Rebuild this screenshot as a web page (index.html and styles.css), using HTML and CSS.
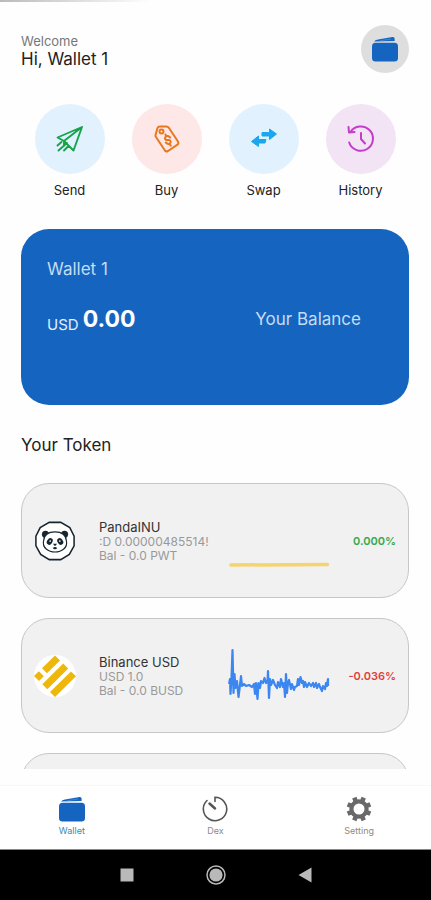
FILE: index.html
```html
<!DOCTYPE html>
<html lang="en">
<head>
<meta charset="utf-8">
<meta name="viewport" content="width=device-width, initial-scale=1">
<title>Wallet</title>
<link rel="stylesheet" href="styles.css">
</head>
<body>
<svg class="defs" aria-hidden="true">
  <symbol id="wallet" viewBox="0 0 28 26">
    <path d="M3 5.500 Q4 4 7 3.500 L21.500 .9 Q23.600 .7 23.600 2.600 V5 L3.400 5.500 Z" fill="#1565c0"/>
    <path d="M9 4.800 L20 3" stroke="#4b8bd6" stroke-width=".8"/>
    <rect x="1" y="6.800" width="26" height="18.700" rx="3.500" fill="#1565c0"/>
  </symbol>
</svg>
<div class="app">
  <main class="screen">
    <header class="header">
      <div>
        <p class="welcome">Welcome</p>
        <h1 class="greeting">Hi, Wallet 1</h1>
      </div>
      <button class="avatar" aria-label="Wallets"><svg class="icon-wallet"><use href="#wallet"/></svg></button>
    </header>

    <section class="actions">
      <button class="action"><span class="disc blue">
        <svg width="30" height="30" viewBox="0 0 30 30" fill="none" stroke="#16a34a" stroke-width="1.900" stroke-linejoin="round" stroke-linecap="round"><path d="M27 3 2.500 13.500 9 17 18.500 26.500Z M27 3 9 17 V21 M12 19 3.500 26.500 M6.500 18 2.500 21.500 M13.500 22 9 26.500"/></svg>
      </span>Send</button>
      <button class="action"><span class="disc rose">
        <svg width="30" height="30" viewBox="0 0 30 30" fill="none" stroke="#e8781e" stroke-width="2" stroke-linejoin="round" stroke-linecap="round"><path d="M3.500 11 5.500 4 Q6 2.500 8 2.500 L14 2.500 Q16 2.500 17 4 L26 17.500 Q27 19.500 25.500 20.700 L16 27 Q14 28 12.800 26.300 L4 13 Q3.200 12 3.500 11Z"/><circle cx="9.500" cy="7.500" r="2"/><path d="M18.200 13.500 Q15.500 10.800 13.700 12.700 C11.800 15.200 14.200 16.400 16 16 C19 15.500 19.500 18.500 17.500 19.700 Q15.500 20.500 13.800 18.500 M13.500 10.500 14.200 12 M17.700 20 18.800 21.700"/></svg>
      </span>Buy</button>
      <button class="action"><span class="disc blue">
        <svg width="30" height="30" viewBox="0 0 30 30" fill="#19a7ed" stroke="#19a7ed" stroke-width="1" stroke-linejoin="round"><path d="M13 8.500 H20.500 V5 L27.500 10 20.500 15.500 V12 H13Z M17 15.500 H9.500 V12 L2.500 17.500 9.500 22.500 V19 H16Z"/></svg>
      </span>Swap</button>
      <button class="action"><span class="disc lilac">
        <svg width="30" height="30" viewBox="0 0 30 30" fill="none" stroke="#c63bc9" stroke-width="2" stroke-linejoin="round" stroke-linecap="round"><path d="M4.500 8 A12.200 12.200 0 1 1 3.200 18.500 M2.500 3 3 8.500 8.500 8 M15 9 V15 L19 19.500"/></svg>
      </span>History</button>
    </section>

    <section class="balance">
      <h2 class="balance-name">Wallet 1</h2>
      <div class="balance-row">
        <p class="amount"><span>USD</span> <strong>0.00</strong></p>
        <p class="balance-label">Your Balance</p>
      </div>
    </section>

    <h2 class="section-title">Your Token</h2>
    <ul class="tokens">
      <li class="token">
        <svg class="coin" viewBox="-1 -1 44 44">
          <path d="M15 1.500H27L36.500 7 41 16V26L36 35 27 40.500H15L6 35 1 26V16L5.500 7Z" fill="#fff" stroke="#17252e" stroke-width="1.600"/>
          <g fill="#17252e"><circle cx="11" cy="14" r="3.700"/><circle cx="31" cy="14" r="3.700"/></g>
          <path d="M21 11.500 C29 11.500 32.500 15 33 21 C34.500 28 28 32.500 21 32.500 S7.500 28 9 21 C9.500 15 13 11.500 21 11.500Z" fill="#fff" stroke="#17252e" stroke-width="1.200"/>
          <g fill="#17252e"><ellipse cx="15.500" cy="21.500" rx="2.800" ry="3.700" transform="rotate(35 15.500 21.500)"/><ellipse cx="26.500" cy="21.500" rx="2.800" ry="3.700" transform="rotate(-35 26.500 21.500)"/><path d="M18.800 24H23.200L21 26.500Z"/><ellipse cx="21" cy="28.500" rx="2" ry="1.200"/></g>
          <g fill="#fff"><circle cx="16" cy="21" r=".9"/><circle cx="26" cy="21" r=".9"/></g>
        </svg>
        <div class="info">
          <h3>PandaINU</h3>
          <p>:D 0.00000485514!</p>
          <p>Bal - 0.0 PWT</p>
        </div>
        <svg class="chart" viewBox="0 0 102 56"><path d="M3 52 99.500 51.500" stroke="#f5d36f" stroke-width="3.500" stroke-linecap="round"/></svg>
        <span class="change up">0.000%</span>
      </li>
      <li class="token">
        <svg class="coin" viewBox="0 0 42 42">
          <circle cx="21" cy="21" r="21" fill="#fff"/>
          <g fill="#edb70b"><path d="M21 .5 26 5.500 13 18.300 8 13.300Z"/><path d="M29.200 8.500 34.200 13.500 13.300 34.200 8.300 29.200Z"/><path d="M37 16.500 42 21.300 21 42 16 37Z"/><path d="M4.800 16.300 9.800 21.300 5 26 0 21Z"/></g>
        </svg>
        <div class="info">
          <h3>Binance USD</h3>
          <p>USD 1.0</p>
          <p>Bal - 0.0 BUSD</p>
        </div>
        <svg class="chart" viewBox="0 0 102 56"><path d="M1 36 2 31 2.500 46 3.500 30 4.500 2 5.500 45 6.500 26 7.500 40 9 33 10.500 49 12 37 13 28 14 38 16 36 18 38 21 37 24 39 26 36 27 46 28 35 29.500 51 30.500 35 32 40 33 33 35 35 36.500 30 38 35 39.500 33 40 23 41 50 42 31 43 37 45 32 47 37 49 40 50 34 52 39 53 31 55 39 56 35 57 49 58 26 59 45 60 35 61 32 63 41 64 36 66 42 67 39 69 38 70 31 71 37 72.500 29 74 35 75 33 76 39 77 34 79 39 81 35 83 38 85 35 86 39 88 35 89 40 91 36 92 39 94 43 95 38 97 41 98 35 99 38 100 31 100 38" fill="none" stroke="#3b86f0" stroke-width="2.200" stroke-linejoin="round"/></svg>
        <span class="change down">-0.036%</span>
      </li>
      <li class="token"></li>
    </ul>
  </main>

  <nav class="tabs">
    <a class="tab active" href="#wallet-tab"><svg class="icon-wallet"><use href="#wallet"/></svg>Wallet</a>
    <a class="tab" href="#dex"><svg width="26" height="26" viewBox="0 0 26 26" fill="none" stroke="#555" stroke-width="1.600" stroke-linecap="round"><path d="M13 5.500 V1.300 A11.700 11.700 0 1 1 5 4.500"/><path d="M7.500 7.500 13 12.500" stroke-width="2.500"/></svg>Dex</a>
    <a class="tab" href="#setting"><svg width="26" height="26" viewBox="0 0 26 26"><circle cx="13" cy="13" r="7.600" fill="none" stroke="#696969" stroke-width="4.200"/><path d="M13 .7V5M13 21V25.300M.7 13H5M21 13H25.300M4.300 4.300 7.300 7.300M18.700 18.700 21.700 21.700M4.300 21.700 7.300 18.700M18.700 7.300 21.700 4.300" transform="rotate(22.500 13 13)" stroke="#696969" stroke-width="4.600"/></svg>Setting</a>
  </nav>
  <footer class="system">
    <button aria-label="Recent apps"><svg width="20" height="20" viewBox="0 0 20 20"><path d="M3.500 3.500H16.500V16.500H3.500Z" fill="#b9b9b9"/></svg></button>
    <button aria-label="Home"><svg width="20" height="20" viewBox="0 0 20 20"><circle cx="10" cy="10" r="9" fill="none" stroke="#b9b9b9" stroke-width="1.500"/><circle cx="10" cy="10" r="6.600" fill="#b9b9b9"/></svg></button>
    <button aria-label="Back"><svg width="20" height="20" viewBox="0 0 20 20"><path d="M3.500 10 16.500 2.500V17.500Z" fill="#b9b9b9"/></svg></button>
  </footer>
</div>
</body>
</html>
```
FILE: styles.css
```css
* { box-sizing: border-box; }
body, h1, h2, h3, p, ul { margin: 0; padding: 0; }
body { background: #fefefe; color: #222; font-family: Inter, "Liberation Sans", sans-serif; }
h1, h2, h3 { font-weight: 400; }
button { border: 0; padding: 0; background: none; font: inherit; color: inherit; }
svg { display: block; }
.defs { display: none; }

.app { height: 100vh; display: flex; flex-direction: column; }
.app::before { content: ""; flex: none; width: 35%; height: 2px; background: linear-gradient(90deg, #bbb, #fefefe); }
.screen { flex: 1; min-height: 0; overflow: hidden; padding: 23px 22px 0 21px; margin-bottom: 16px; }

.header { display: flex; justify-content: space-between; align-items: flex-end; }
.welcome { font-size: 13px; line-height: 16px; color: #777; }
.greeting { margin-bottom: 4px; font-size: 17px; line-height: 20px; }
.avatar { width: 48px; height: 48px; border-radius: 50%; background: #dedede; display: grid; place-items: center; }
.icon-wallet { width: 28px; height: 26px; }

.actions { display: grid; grid-template-columns: repeat(4, 1fr); margin-top: 31px; }
.action { display: flex; flex-direction: column; align-items: center; gap: 8px; font-size: 13px; line-height: 16px; }
.disc { width: 70px; height: 70px; border-radius: 50%; display: grid; place-items: center; }
.blue { background: #e1f2fe; }
.rose { background: #fde8e7; }
.lilac { background: #f2e3f5; }

.balance { margin-top: 31px; height: 176px; padding: 30px 48px 0 26px; border-radius: 28px; background: #1565c0; color: #c5dcf4; }
.balance-name { font-size: 17px; line-height: 20px; }
.balance-row { display: flex; justify-content: space-between; align-items: flex-start; margin-top: 26px; }
.amount { display: flex; align-items: flex-end; gap: 4px; font-size: 15px; line-height: 16px; color: #e4effa; }
.amount strong { font-size: 23px; line-height: 28px; color: #fff; }
.balance-label { font-size: 17px; line-height: 28px; }

.section-title { margin-top: 30px; font-size: 17px; line-height: 20px; }
.tokens { list-style: none; display: grid; gap: 20px; margin-top: 28px; }
.token { display: grid; grid-template-columns: 42px 110px 102px 1fr; align-items: center; height: 115px; padding: 0 12px; border: 1px solid #c6c6c6; border-radius: 28px; background: #f1f1f1; }
.coin { width: 42px; height: 42px; }
.info { margin-left: 23px; width: 110px; font-size: 12px; line-height: 14px; color: #999; white-space: nowrap; }
.info h3 { font-size: 13px; line-height: 16px; color: #333; }
.chart { width: 102px; height: 56px; margin-left: 42px; fill: none; }
.change { text-align: right; font-size: 11px; font-weight: 600; }
.up { color: #35a84c; }
.down { color: #df3f3a; }

.tabs { display: grid; grid-template-columns: repeat(3, 1fr); height: 64px; border-top: 1px solid #f7f7f7; background: #fff; }
.tab { display: flex; flex-direction: column; align-items: center; gap: 2px; padding-top: 10px; font-size: 9px; line-height: 14px; color: #8b8b8b; text-decoration: none; }
.tab svg { height: 26px; }
.active { color: #4688a8; }
.system { display: flex; justify-content: center; align-items: center; gap: 69px; height: 51px; border-top: 1px solid #888; background: #000; }
```
